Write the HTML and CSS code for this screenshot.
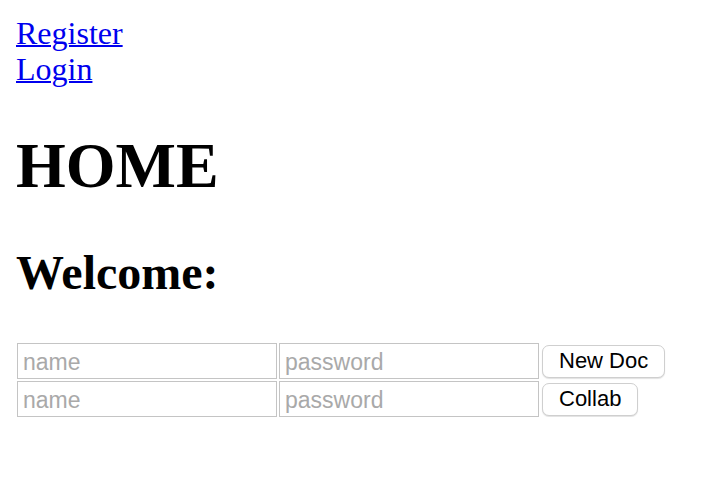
FILE: index.html
```html
<!DOCTYPE html>
<html>
<head>
<meta charset="utf-8">
<link rel="stylesheet" href="styles.css">
</head>
<body>
<div class="nav">
  <a class="nav-link" href="#">Register</a>
  <a class="nav-link" href="#">Login</a>
</div>
<h1 class="title">HOME</h1>
<h2 class="subtitle">Welcome:</h2>
<div class="forms">
  <form class="doc-row">
    <input class="field" type="text" placeholder="name">
    <input class="field" type="password" placeholder="password">
    <button class="btn" type="button">New Doc</button>
  </form>
  <form class="doc-row">
    <input class="field" type="text" placeholder="name">
    <input class="field" type="password" placeholder="password">
    <button class="btn" type="button">Collab</button>
  </form>
</div>
</body>
</html>
```
FILE: styles.css
```css
html, body {
  background: #fff;
}
body {
  margin: 16px;
  font-family: "Liberation Serif", "Times New Roman", serif;
  font-size: 32px;
  color: #000;
}
.nav {
  display: flex;
  flex-direction: column;
  align-items: flex-start;
  line-height: 35.5px;
}
.nav-link {
  color: #0000ee;
  text-decoration: underline;
  text-decoration-thickness: 2px;
}
.title {
  font-size: 64px;
  font-weight: bold;
  margin: 42px 0;
  line-height: 74px;
}
.subtitle {
  font-size: 48px;
  font-weight: bold;
  margin: 42px 0 43px;
  line-height: 55px;
}
.forms {
  display: flex;
  flex-direction: column;
  gap: 2px;
}
.doc-row {
  display: flex;
  align-items: center;
  gap: 2px;
  margin: 0;
  padding-left: 1px;
}
.field {
  box-sizing: border-box;
  width: 260px;
  height: 36px;
  margin: 0;
  padding: 2px 5px 0;
  border: 1px solid #c4c4c4;
  font-family: "Liberation Sans", Arial, sans-serif;
  font-size: 23px;
  background: #fff;
  outline: none;
}
.field::placeholder {
  color: #a9a9a9;
}
.btn {
  box-sizing: border-box;
  height: 33px;
  margin: 0 0 0 1px;
  padding: 0 16px;
  border: 1px solid #cfcfcf;
  border-radius: 7px;
  background: #fff;
  box-shadow: 0 1px 1px rgba(0,0,0,0.12);
  font-family: "Liberation Sans", Arial, sans-serif;
  font-size: 22px;
  color: #000;
}
```
